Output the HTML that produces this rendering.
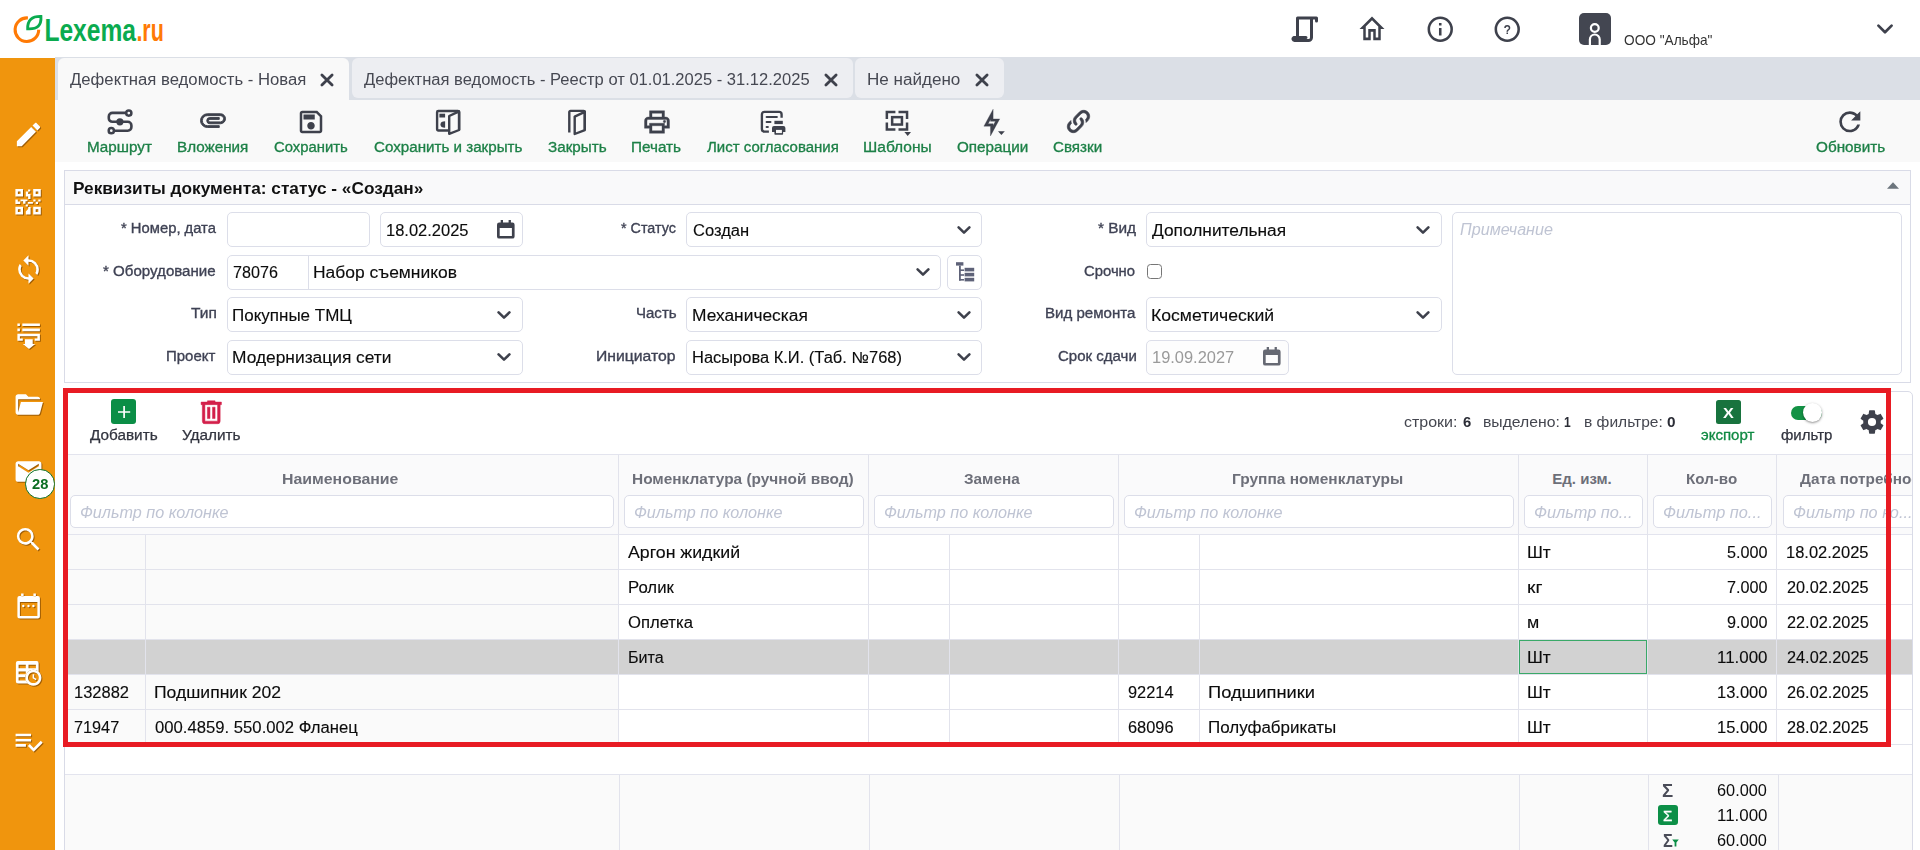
<!DOCTYPE html>
<html lang="ru">
<head>
<meta charset="utf-8">
<title>Дефектная ведомость - Новая</title>
<style>
*{box-sizing:border-box;margin:0;padding:0}
html,body{width:1920px;height:850px;overflow:hidden;background:#fff}
body{font-family:"Liberation Sans",sans-serif;color:#222;position:relative}
.abs{position:absolute}
svg{display:block;overflow:visible}
.t{position:absolute;white-space:nowrap;line-height:1;transform-origin:0 50%}
.inp{position:absolute;border:1px solid #dcdee9;border-radius:5px;background:#fff}
.flt{position:absolute;border:1px solid #dcdee9;border-radius:5px;background:#fff;height:33px;overflow:hidden}
.vl{position:absolute;width:1px;background:#e2e3ec}
.hl{position:absolute;height:1px;background:#e2e3ec}
.sh{filter:drop-shadow(1px 1.5px 0.6px rgba(140,80,0,.55))}
</style>
</head>
<body>
<!-- header -->
<div class="abs" style="left:0;top:0;width:1920px;height:58px;background:#fff">
<svg class="abs" style="left:10px;top:10px" width="160" height="40" viewBox="0 0 160 40">
<path d="M17.9 7.95A11.8 11.8 0 1 0 28.7 19.7" fill="none" stroke="#ff7a05" stroke-width="3.1"/>
<path d="M17.7 18.8C17.4 10 22 6.2 30.9 6.4C31.6 15.4 27.4 19.4 17.7 18.8Z" fill="none" stroke="#0aab4f" stroke-width="2.9" stroke-linejoin="miter"/>
<text x="34.4" y="30.8" font-family="Liberation Sans, sans-serif" font-weight="700" font-size="30.6" fill="#0aab4f" textLength="91.6" lengthAdjust="spacingAndGlyphs">Lexema</text>
<text x="126.4" y="30.8" font-family="Liberation Sans, sans-serif" font-weight="700" font-size="30.6" fill="#ff7a05" textLength="27.4" lengthAdjust="spacingAndGlyphs">.ru</text>
</svg>
<svg class="abs" style="left:1290px;top:14px" width="30" height="30" viewBox="0 0 30 30" fill="none" stroke="#3e414c" stroke-width="3" stroke-linejoin="round" stroke-linecap="round"><path d="M7.5 22V4H26.5V7M21.5 4V23.5A3 3 0 0 1 18.5 26.5H4.5A1.6 1.6 0 0 1 3.6 23.6H16"/></svg>
<svg class="abs" style="left:1357px;top:14px;transform:scaleY(1.12);transform-origin:50% 50%" width="30" height="30" viewBox="0 0 24 24" fill="#3e414c"><path d="M12 5.69L17 10.19V18H15V12H9V18H7V10.19L12 5.69M12 3L2 12H5V20H11V14H13V20H19V12H22"/></svg>
<svg class="abs" style="left:1424.5px;top:14px;" width="30.5" height="30.5" viewBox="0 0 24 24" fill="#3e414c"><path d="M11,9H13V7H11M12,20C7.59,20 4,16.41 4,12C4,7.59 7.59,4 12,4C16.41,4 20,7.59 20,12C20,16.41 16.41,20 12,20M12,2A10,10 0 0,0 2,12A10,10 0 0,0 12,22A10,10 0 0,0 22,12A10,10 0 0,0 12,2M11,17H13V11H11V17Z"/></svg>
<svg class="abs" style="left:1491.7px;top:14px" width="30.5" height="30.5" viewBox="0 0 24 24" fill="#3e414c"><path d="M12,2A10,10 0 0,0 2,12A10,10 0 0,0 12,22A10,10 0 0,0 22,12A10,10 0 0,0 12,2M12,20C7.59,20 4,16.41 4,12C4,7.59 7.59,4 12,4C16.41,4 20,7.59 20,12C20,16.41 16.41,20 12,20Z"/><path transform="translate(12 12.2) scale(.6) translate(-12 -12)" d="M11,18H13V16H11V18M12,6A4,4 0 0,0 8,10H10A2,2 0 0,1 12,8A2,2 0 0,1 14,10C14,12 11,11.75 11,15H13C13,12.75 16,12.5 16,10A4,4 0 0,0 12,6Z"/></svg>
<div class="abs" style="left:1579px;top:13px;width:32px;height:32px;background:#434651;border-radius:5px"></div>
<svg class="abs" style="left:1579px;top:13px" width="32" height="32" viewBox="0 0 32 32" fill="none" stroke="#fff" stroke-width="2.2"><circle cx="15.8" cy="15" r="3.9"/><path d="M10.9 32V26.4A4.9 4.9 0 0 1 20.7 26.4V32"/></svg>
<div class="t" style="left:1624px;top:33px;font-size:14.5px;color:#333;transform:scaleX(0.9424);">ООО "Альфа"</div>
<svg class="abs" style="left:1875px;top:21.2px" width="20" height="16" viewBox="0 0 20 16" fill="none" stroke="#3e414c" stroke-width="2.7" stroke-linecap="round" stroke-linejoin="round"><path d="M3.4 4.6L10 11.2L16.6 4.6"/></svg>
</div>
<!-- sidebar -->
<div class="abs" style="left:0;top:58px;width:55px;height:792px;background:#f0950d"></div>
<svg class="abs" style="left:12.5px;top:118.5px;filter:drop-shadow(1px 1.3px 0.5px rgba(125,70,0,.7))" width="31" height="31" viewBox="0 0 24 24" fill="#fff"><path d="M20.71,7.04C21.1,6.65 21.1,6 20.71,5.63L18.37,3.29C18,2.9 17.35,2.9 16.96,3.29L15.12,5.12L18.87,8.87M3,17.25V21H6.75L17.81,9.93L14.06,6.18L3,17.25Z"/></svg>
<svg class="abs" style="left:12.5px;top:185.5px;filter:drop-shadow(1px 1.3px 0.5px rgba(125,70,0,.7))" width="31" height="31" viewBox="0 0 31 31" fill="#fff"><path fill-rule="evenodd" d="M2.9 3h7.6v7.6h-7.6ZM5.4 5.5v2.6h2.6v-2.6ZM20.7 3h7.6v7.6h-7.6ZM23.2 5.5v2.6h2.6v-2.6ZM2.9 20.8h7.6v7.6h-7.6ZM5.4 23.3v2.6h2.6v-2.6ZM20.7 20.8h7.6v7.6h-7.6ZM23.2 23.3v2.6h2.6v-2.6ZM15.6 3.4h2.2v2.1h-2.2ZM13.3 5.6h2.4v2.4h2.3v5h-2.4v-2.4h-2.3ZM2.9 13.4h2.4v2.2h2.4v2.3h-4.8ZM8 13.4h7v1.9h-2v2.4h-2.4v-2.4h-2.6ZM15.4 16h5v1.8h-5ZM20.8 13.4h2.3v2.2h-2.3ZM23.2 15.7h2.3v2.2h-2.3ZM25.8 13.4h2.3v2.2h-2.3ZM13.2 18.4h2.2v2h-2.2ZM13.3 25.4l2.4-2.4v-2h2.4v7.4h-4.8Z" transform="translate(-.5 0)"/></svg>
<svg class="abs" style="left:12.5px;top:253.5px;filter:drop-shadow(1px 1.3px 0.5px rgba(125,70,0,.7))" width="31" height="31" viewBox="0 0 24 24" fill="#fff"><path d="M12,18A6,6 0 0,1 6,12C6,11 6.25,10.03 6.7,9.2L5.24,7.74C4.46,8.97 4,10.43 4,12A8,8 0 0,0 12,20V23L16,19L12,15M12,4V1L8,5L12,9V6A6,6 0 0,1 18,12C18,13 17.75,13.97 17.3,14.8L18.76,16.26C19.54,15.03 20,13.57 20,12A8,8 0 0,0 12,4Z"/></svg>
<svg class="abs" style="left:12.5px;top:321px;filter:drop-shadow(1px 1.3px 0.5px rgba(125,70,0,.7))" width="31" height="31" viewBox="0 0 31 31" fill="#fff"><path d="M4.4 2.4H6.9V5.1H4.4ZM9.3 2.4H26.9V5.1H9.3ZM4.4 7.6H6.9V10.3H4.4ZM9.3 7.6H26.9V10.3H9.3ZM4.4 12.8H26.9V19.7H21.7V17.5H24.4V15.2H6.9V17.5H9.8V19.7H4.4ZM12 18.2H19.7V23.1H22.2L16 28.1L9.8 23.1H12Z"/></svg>
<svg class="abs" style="left:12.5px;top:388.5px;filter:drop-shadow(1px 1.3px 0.5px rgba(125,70,0,.7))" width="31" height="31" viewBox="0 0 24 24" fill="#fff"><path d="M19,20H4C2.89,20 2,19.1 2,18V6C2,4.89 2.89,4 4,4H10L12,6H19A2,2 0 0,1 21,8H21L4,8V18L6.14,10H23.21L20.93,18.5C20.7,19.37 19.92,20 19,20Z"/></svg>
<svg class="abs" style="left:12.5px;top:455.5px;filter:drop-shadow(1px 1.3px 0.5px rgba(125,70,0,.7))" width="31" height="31" viewBox="0 0 24 24" fill="#fff"><path d="M20,8L12,13L4,8V6L12,11L20,6M20,4H4C2.89,4 2,4.89 2,6V18A2,2 0 0,0 4,20H20A2,2 0 0,0 22,18V6C22,4.89 21.1,4 20,4Z"/></svg>
<svg class="abs" style="left:12.5px;top:523.5px;filter:drop-shadow(1px 1.3px 0.5px rgba(125,70,0,.7))" width="31" height="31" viewBox="0 0 24 24" fill="#fff"><path d="M9.5,3A6.5,6.5 0 0,1 16,9.5C16,11.11 15.41,12.59 14.44,13.73L14.71,14H15.5L20.5,19L19,20.5L14,15.5V14.71L13.73,14.44C12.59,15.41 11.11,16 9.5,16A6.5,6.5 0 0,1 3,9.5A6.5,6.5 0 0,1 9.5,3M9.5,5C7,5 5,7 5,9.5C5,12 7,14 9.5,14C12,14 14,12 14,9.5C14,7 12,5 9.5,5Z"/></svg>
<svg class="abs" style="left:12.5px;top:591px;filter:drop-shadow(1px 1.3px 0.5px rgba(125,70,0,.7))" width="31" height="31" viewBox="0 0 31 31" fill="#fff"><path fill-rule="evenodd" d="M6.4 5.1H24.9A2 2 0 0 1 26.9 7.1V25.6A2 2 0 0 1 24.9 27.6H6.4A2 2 0 0 1 4.4 25.6V7.1A2 2 0 0 1 6.4 5.1ZM6.9 11V24.9H24.4V11ZM8.1 2.4H10.6V5.2H8.1ZM20.4 2.4H22.9V5.2H20.4Z"/><circle cx="10.3" cy="15" r="1.2"/><circle cx="15.5" cy="15" r="1.2"/><circle cx="20.4" cy="15" r="1.2"/></svg>
<svg class="abs" style="left:12.5px;top:658.5px;filter:drop-shadow(1px 1.3px 0.5px rgba(125,70,0,.7))" width="31" height="31" viewBox="0 0 31 31" fill="#fff"><mask id="tcm"><rect width="31" height="31" fill="#fff"/><circle cx="20.4" cy="18.7" r="8" fill="#000"/></mask><path mask="url(#tcm)" fill-rule="evenodd" d="M4.9 2.1H23.6A2 2 0 0 1 25.6 4.1V22.4A2 2 0 0 1 23.6 24.4H4.9A2 2 0 0 1 2.9 22.4V4.1A2 2 0 0 1 4.9 2.1ZM5.6 5.8V9.3H12.8V5.8ZM15.5 5.8V9.3H22.9V5.8ZM5.6 12.5V15.2H12.8V12.5ZM5.6 18.2V21.6H12.8V18.2Z"/><path fill-rule="evenodd" d="M20.4 10.7A8 8 0 1 1 20.39 10.7ZM20.4 13.3A5.4 5.4 0 1 0 20.41 13.3Z"/><path d="M20.4 15.2V18.9L23.2 20.6" fill="none" stroke="#fff" stroke-width="1.6"/></svg>
<svg class="abs" style="left:12.5px;top:726px;filter:drop-shadow(1px 1.3px 0.5px rgba(125,70,0,.7))" width="31" height="31" viewBox="0 0 24 24" fill="#fff"><path d="M14,10H2V12H14V10M14,6H2V8H14V6M2,16H10V14H2V16M21.5,11.5L23,13L16,20L11.5,15.5L13,14L16,17L21.5,11.5Z"/></svg>
<div class="abs" style="left:25px;top:469px;width:29.5px;height:29.5px;background:#fff;border:1.6px solid #0b6e22;border-radius:50%"></div>
<div class="t" style="left:31.6px;top:476px;font-size:15px;color:#0b6e22;font-weight:700;transform:scaleX(0.9791);">28</div>
<!-- tabs -->
<div class="abs" style="left:55px;top:57px;width:1865px;height:43px;background:#dbdfe6"></div>
<div class="abs" style="left:58px;top:58px;width:291.4px;height:42px;background:#f9f9f9;border-radius:6px 6px 0 0"></div>
<div class="abs" style="left:352.3px;top:58px;width:500.6px;height:40.2px;background:#edeef2;border-radius:6px"></div>
<div class="abs" style="left:855px;top:58px;width:148.6px;height:40.2px;background:#edeef2;border-radius:6px"></div>
<div class="t" style="left:70px;top:72px;font-size:16px;color:#464852;transform:scaleX(1.0443);">Дефектная ведомость - Новая</div>
<svg class="abs" style="left:320px;top:72.7px" width="14" height="14" viewBox="0 0 14 14" fill="none" stroke="#3e414c" stroke-width="2.8" stroke-linecap="round"><path d="M1.9 1.9L12.1 12.1M12.1 1.9L1.9 12.1"/></svg>
<div class="t" style="left:364px;top:72px;font-size:16px;color:#464852;transform:scaleX(1.0335);">Дефектная ведомость - Реестр от 01.01.2025 - 31.12.2025</div>
<svg class="abs" style="left:824.4px;top:72.7px" width="14" height="14" viewBox="0 0 14 14" fill="none" stroke="#3e414c" stroke-width="2.8" stroke-linecap="round"><path d="M1.9 1.9L12.1 12.1M12.1 1.9L1.9 12.1"/></svg>
<div class="t" style="left:867.23px;top:72px;font-size:16px;color:#464852;transform:scaleX(1.0665);">Не найдено</div>
<svg class="abs" style="left:974.9px;top:72.7px" width="14" height="14" viewBox="0 0 14 14" fill="none" stroke="#3e414c" stroke-width="2.8" stroke-linecap="round"><path d="M1.9 1.9L12.1 12.1M12.1 1.9L1.9 12.1"/></svg>
<!-- toolbar -->
<div class="abs" style="left:55px;top:100px;width:1865px;height:62px;background:#f9f9f9"></div>
<div class="t" style="left:86.9px;top:141px;font-size:13.8px;color:#1d8047;-webkit-text-stroke:0.3px #1d8047;transform:scaleX(1.1030);">Маршрут</div>
<div class="t" style="left:177.2px;top:141px;font-size:13.8px;color:#1d8047;-webkit-text-stroke:0.3px #1d8047;transform:scaleX(1.1036);">Вложения</div>
<div class="t" style="left:274.2px;top:141px;font-size:13.8px;color:#1d8047;-webkit-text-stroke:0.3px #1d8047;transform:scaleX(1.0765);">Сохранить</div>
<div class="t" style="left:374px;top:141px;font-size:13.8px;color:#1d8047;-webkit-text-stroke:0.3px #1d8047;transform:scaleX(1.0988);">Сохранить и закрыть</div>
<div class="t" style="left:547.8px;top:141px;font-size:13.8px;color:#1d8047;-webkit-text-stroke:0.3px #1d8047;transform:scaleX(1.1029);">Закрыть</div>
<div class="t" style="left:631.39px;top:141px;font-size:13.8px;color:#1d8047;-webkit-text-stroke:0.3px #1d8047;transform:scaleX(1.1066);">Печать</div>
<div class="t" style="left:707px;top:141px;font-size:13.8px;color:#1d8047;-webkit-text-stroke:0.3px #1d8047;transform:scaleX(1.0861);">Лист согласования</div>
<div class="t" style="left:863.27px;top:141px;font-size:13.8px;color:#1d8047;-webkit-text-stroke:0.3px #1d8047;transform:scaleX(1.1269);">Шаблоны</div>
<div class="t" style="left:956.9px;top:141px;font-size:13.8px;color:#1d8047;-webkit-text-stroke:0.3px #1d8047;transform:scaleX(1.1029);">Операции</div>
<div class="t" style="left:1053.3px;top:141px;font-size:13.8px;color:#1d8047;-webkit-text-stroke:0.3px #1d8047;transform:scaleX(1.1007);">Связки</div>
<div class="t" style="left:1816px;top:141px;font-size:13.8px;color:#1d8047;-webkit-text-stroke:0.3px #1d8047;transform:scaleX(1.1079);">Обновить</div>
<svg class="abs" style="left:107px;top:109px" width="26" height="26" viewBox="0 0 26 26" fill="none" stroke="#3e414c" stroke-width="2.6" stroke-linecap="round"><path d="M19 3.9H5.4A3.6 3.6 0 0 0 1.8 7.5V9.2A3.6 3.6 0 0 0 5.4 12.8H20.8A3.6 3.6 0 0 1 24.4 16.4V18.1A3.6 3.6 0 0 1 20.8 21.7H7.2"/><circle cx="21.8" cy="4.1" r="2.6" fill="#f9f9f9" stroke-width="2.5"/><circle cx="4.3" cy="21.7" r="2.6" fill="#f9f9f9" stroke-width="2.5"/><circle cx="12.9" cy="12.8" r="3.6" fill="#3e414c" stroke="none"/></svg>
<svg class="abs" style="left:198px;top:105.4px;stroke:#3e414c;stroke-width:.75px" width="30" height="30" viewBox="0 0 24 24" fill="#3e414c"><path d="M7.5,18A5.5,5.5 0 0,1 2,12.5A5.5,5.5 0 0,1 7.5,7H18A4,4 0 0,1 22,11A4,4 0 0,1 18,15H9.5A2.5,2.5 0 0,1 7,12.5A2.5,2.5 0 0,1 9.5,10H17V11.5H9.5A1,1 0 0,0 8.5,12.5A1,1 0 0,0 9.5,13.5H18A2.5,2.5 0 0,0 20.5,11A2.5,2.5 0 0,0 18,8.5H7.5A4,4 0 0,0 3.5,12.5A4,4 0 0,0 7.5,16.5H17V18H7.5Z"/></svg>
<svg class="abs" style="left:296px;top:107px;" width="30" height="30" viewBox="0 0 24 24" fill="#3e414c"><path d="M17 3H5C3.89 3 3 3.9 3 5V19C3 20.1 3.89 21 5 21H19C20.1 21 21 20.1 21 19V7L17 3M19 19H5V5H16.17L19 7.83V19M12 12C10.34 12 9 13.34 9 15S10.34 18 12 18 15 16.66 15 15 13.66 12 12 12M6 6H15V10H6V6Z"/></svg>
<svg class="abs" style="left:434px;top:108px" width="28" height="28" viewBox="0 0 28 28" fill="none" stroke="#3e414c" stroke-width="2.4" stroke-linejoin="round"><path d="M15.2 22.5H4.3A1.2 1.2 0 0 1 3.1 21.3V4.2A1.2 1.2 0 0 1 4.3 3H23.9A1.2 1.2 0 0 1 25.1 4.2V22"/><path d="M15.2 8L25.1 3.4V22L15.2 25.8Z"/><rect x="5.4" y="5.7" width="5.7" height="3.8" fill="#3e414c" stroke="none"/><path d="M11.1 13.2A4.6 3.3 0 0 0 11.1 19.8Z" fill="#3e414c" stroke="none"/></svg>
<svg class="abs" style="left:565px;top:108px" width="24" height="28" viewBox="0 0 24 28" fill="none" stroke="#3e414c" stroke-width="2.4" stroke-linejoin="round"><path d="M4.3 24.6V4.1A1.2 1.2 0 0 1 5.5 2.9H18.6A1.2 1.2 0 0 1 19.8 4.1V22.1"/><path d="M9.7 8.6L19.8 3.8V22.1L9.7 26Z"/></svg>
<svg class="abs" style="left:642px;top:107px;stroke:#3e414c;stroke-width:.3px" width="30" height="30" viewBox="0 0 24 24" fill="#3e414c"><path d="M19 8C20.66 8 22 9.34 22 11V17H18V21H6V17H2V11C2 9.34 3.34 8 5 8H6V3H18V8H19M8 5V8H16V5H8M16 19V15H8V19H16M18 15H20V11C20 10.45 19.55 10 19 10H5C4.45 10 4 10.45 4 11V15H6V13H18V15M19 11.5C19 12.05 18.55 12.5 18 12.5S17 12.05 17 11.5 17.45 10.5 18 10.5 19 10.95 19 11.5Z"/></svg>
<svg class="abs" style="left:759px;top:109px" width="28" height="27" viewBox="0 0 28 27" fill="#3e414c"><path d="M22.6 8.8V5.4A2.5 2.5 0 0 0 20.1 2.9H5.4A2.5 2.5 0 0 0 2.9 5.4V20.1A2.5 2.5 0 0 0 5.4 22.6H9.9" fill="none" stroke="#3e414c" stroke-width="2.35"/><path d="M7.6 8H17.9M7.6 12.95H11.5M7.6 17.95H8.9" fill="none" stroke="#3e414c" stroke-width="2" stroke-linecap="round"/><rect x="15.4" y="11.8" width="8.4" height="3.3"/><path d="M15 17H24.4A2 2 0 0 1 26.4 19V22.9H13V19A2 2 0 0 1 15 17Z"/><rect x="15.4" y="20.1" width="8.7" height="5.6" rx=".8"/><rect x="17" y="20.9" width="5.9" height="3.2" fill="#f9f9f9"/></svg>
<svg class="abs" style="left:884px;top:109px" width="30" height="28" viewBox="0 0 30 28" fill="none" stroke="#3e414c" stroke-width="2.5"><path d="M2.85 9.9V3H11.4M14.5 3H23.05V9.9M23.05 13.6V20.5H14.5M11.4 20.5H2.85V13.6"/><rect x="8.15" y="8.15" width="9.8" height="7.4"/><path d="M20.4 23.1H27L23.7 27Z" fill="#3e414c" stroke="none"/></svg>
<svg class="abs" style="left:976.3px;top:107.5px" width="31.6" height="29.1" viewBox="0 0 24 24" preserveAspectRatio="none" fill="#3e414c" stroke="#3e414c" stroke-width=".25"><path d="M11 9.47V11H14.76L13 14.53V13H9.24L11 9.47M13 1L6 15H11V23L18 9H13V1Z"/></svg>
<svg class="abs" style="left:998px;top:130.8px" width="8" height="5" viewBox="0 0 8 5"><path d="M0 .2H6.8L3.4 4Z" fill="#3e414c"/></svg>
<svg class="abs" style="left:1063.8px;top:107.3px;stroke:#3e414c;stroke-width:.6px" width="29" height="29" viewBox="0 0 24 24" fill="#3e414c"><path d="M10.59,13.41C11,13.8 11,14.44 10.59,14.83C10.2,15.22 9.56,15.22 9.17,14.83C7.22,12.88 7.22,9.71 9.17,7.76V7.76L12.71,4.22C14.66,2.27 17.83,2.27 19.78,4.22C21.73,6.17 21.73,9.34 19.78,11.29L18.29,12.78C18.3,11.96 18.17,11.14 17.89,10.36L18.36,9.88C19.54,8.71 19.54,6.81 18.36,5.64C17.19,4.46 15.29,4.46 14.12,5.64L10.59,9.17C9.41,10.34 9.41,12.24 10.59,13.41M13.41,9.17C13.8,8.78 14.44,8.78 14.83,9.17C16.78,11.12 16.78,14.29 14.83,16.24V16.24L11.29,19.78C9.34,21.73 6.17,21.73 4.22,19.78C2.27,17.83 2.27,14.66 4.22,12.71L5.71,11.22C5.7,12.04 5.83,12.86 6.11,13.65L5.64,14.12C4.46,15.29 4.46,17.19 5.64,18.36C6.81,19.54 8.71,19.54 9.88,18.36L13.41,14.83C14.59,13.66 14.59,11.76 13.41,10.59C13,10.2 13,9.56 13.41,9.17Z"/></svg>
<svg class="abs" style="left:1833.6px;top:106.4px;" width="31.6" height="31.6" viewBox="0 0 24 24" fill="#3e414c"><path d="M17.65,6.35C16.2,4.9 14.21,4 12,4A8,8 0 0,0 4,12A8,8 0 0,0 12,20C15.73,20 18.84,17.45 19.73,14H17.65C16.83,16.33 14.61,18 12,18A6,6 0 0,1 6,12A6,6 0 0,1 12,6C13.66,6 15.14,6.69 16.22,7.78L13,11H20V4L17.65,6.35Z"/></svg>
<!-- form panel -->
<div class="abs" style="left:64px;top:170px;width:1847px;height:213px;border:1px solid #d9dbe7;background:#fff"></div>
<div class="abs" style="left:65px;top:171px;width:1845px;height:34px;background:#f9f9fa;border-bottom:1px solid #d9dbe7"></div>
<div class="t" style="left:72.96px;top:181px;font-size:16.6px;color:#111;font-weight:700;transform:scaleX(1.0386);">Реквизиты документа: статус - «Создан»</div>
<svg class="abs" style="left:1886.5px;top:182px" width="12" height="7" viewBox="0 0 12 7"><path d="M0 6.8L6 .3L12 6.8Z" fill="#6c757d"/></svg>
<div class="t" style="left:121px;top:222px;font-size:13.8px;color:#3f4254;-webkit-text-stroke:0.32px #3f4254;transform:scaleX(1.0717);">* Номер, дата</div>
<div class="t" style="left:103.3px;top:265px;font-size:13.8px;color:#3f4254;-webkit-text-stroke:0.32px #3f4254;transform:scaleX(1.0932);">* Оборудование</div>
<div class="t" style="left:191px;top:307px;font-size:13.8px;color:#3f4254;-webkit-text-stroke:0.32px #3f4254;transform:scaleX(1.1230);">Тип</div>
<div class="t" style="left:166.21px;top:350px;font-size:13.8px;color:#3f4254;-webkit-text-stroke:0.32px #3f4254;transform:scaleX(1.0858);">Проект</div>
<div class="t" style="left:621px;top:222px;font-size:13.8px;color:#3f4254;-webkit-text-stroke:0.32px #3f4254;transform:scaleX(1.0394);">* Статус</div>
<div class="t" style="left:635.61px;top:307px;font-size:13.8px;color:#3f4254;-webkit-text-stroke:0.32px #3f4254;transform:scaleX(1.0891);">Часть</div>
<div class="t" style="left:596.16px;top:350px;font-size:13.8px;color:#3f4254;-webkit-text-stroke:0.32px #3f4254;transform:scaleX(1.1396);">Инициатор</div>
<div class="t" style="left:1097.7px;top:222px;font-size:13.8px;color:#3f4254;-webkit-text-stroke:0.32px #3f4254;transform:scaleX(1.1140);">* Вид</div>
<div class="t" style="left:1084.3px;top:265px;font-size:13.8px;color:#3f4254;-webkit-text-stroke:0.32px #3f4254;transform:scaleX(1.0750);">Срочно</div>
<div class="t" style="left:1044.91px;top:307px;font-size:13.8px;color:#3f4254;-webkit-text-stroke:0.32px #3f4254;transform:scaleX(1.0928);">Вид ремонта</div>
<div class="t" style="left:1057.7px;top:350px;font-size:13.8px;color:#3f4254;-webkit-text-stroke:0.32px #3f4254;transform:scaleX(1.0881);">Срок сдачи</div>
<div class="inp" style="left:227px;top:212px;width:143px;height:35px;"></div>
<div class="inp" style="left:380px;top:212px;width:143px;height:35px;"></div>
<div class="t" style="left:385.67px;top:223px;font-size:16px;color:#0c0c0c;-webkit-text-stroke:0.12px #0c0c0c;transform:scaleX(1.0306);">18.02.2025</div>
<svg class="abs" style="left:497.3px;top:220.2px" width="17.6" height="18.6" viewBox="0 0 17.6 18.6" fill="#3e414c"><path fill-rule="evenodd" d="M2.2 2.5H15.4A2.2 2.2 0 0 1 17.6 4.7V16.4A2.2 2.2 0 0 1 15.4 18.6H2.2A2.2 2.2 0 0 1 0 16.4V4.7A2.2 2.2 0 0 1 2.2 2.5ZM2.7 7.9V15.9H14.9V7.9ZM3.7 0H6V2.6H3.7ZM11.6 0H13.9V2.6H11.6Z"/></svg>
<div class="inp" style="left:227px;top:255px;width:714px;height:35px;"></div>
<div class="abs" style="left:308px;top:256px;width:1px;height:33px;background:#dcdee9"></div>
<div class="t" style="left:233.3px;top:265px;font-size:16px;color:#0c0c0c;-webkit-text-stroke:0.12px #0c0c0c;transform:scaleX(1.0091);">78076</div>
<div class="t" style="left:313.21px;top:265px;font-size:16px;color:#0c0c0c;-webkit-text-stroke:0.12px #0c0c0c;transform:scaleX(1.0903);">Набор съемников</div>
<svg class="abs" style="left:914.4px;top:266.2px" width="18" height="12" viewBox="0 0 18 12" fill="none" stroke="#3e414c" stroke-width="2.6" stroke-linecap="round" stroke-linejoin="round"><path d="M3.6 3.4L9 8.6L14.4 3.4"/></svg>
<div class="inp" style="left:947px;top:255px;width:35px;height:35px;"></div>
<svg class="abs" style="left:955px;top:261px" width="20" height="22" viewBox="0 0 20 22" fill="#5e6278"><rect x="1" y="1.2" width="7.4" height="3.4"/><rect x="4" y="4.6" width="1.8" height="15"/><rect x="4" y="8.4" width="5" height="1.6"/><rect x="4" y="13.2" width="5" height="1.6"/><rect x="4" y="18" width="5" height="1.6"/><rect x="9.6" y="6.8" width="9.6" height="3.6"/><rect x="9.6" y="11.8" width="9.6" height="3.6"/><rect x="9.6" y="16.8" width="9.6" height="3.6"/></svg>
<div class="inp" style="left:227px;top:297px;width:296px;height:35px;"></div>
<div class="t" style="left:232.24px;top:308px;font-size:16px;color:#0c0c0c;-webkit-text-stroke:0.12px #0c0c0c;transform:scaleX(1.0623);">Покупные ТМЦ</div>
<svg class="abs" style="left:495px;top:308.6px" width="18" height="12" viewBox="0 0 18 12" fill="none" stroke="#3e414c" stroke-width="2.6" stroke-linecap="round" stroke-linejoin="round"><path d="M3.6 3.4L9 8.6L14.4 3.4"/></svg>
<div class="inp" style="left:227px;top:340px;width:296px;height:35px;"></div>
<div class="t" style="left:232.22px;top:350px;font-size:16px;color:#0c0c0c;-webkit-text-stroke:0.12px #0c0c0c;transform:scaleX(1.0848);">Модернизация сети</div>
<svg class="abs" style="left:495px;top:351.4px" width="18" height="12" viewBox="0 0 18 12" fill="none" stroke="#3e414c" stroke-width="2.6" stroke-linecap="round" stroke-linejoin="round"><path d="M3.6 3.4L9 8.6L14.4 3.4"/></svg>
<div class="inp" style="left:686px;top:212px;width:296px;height:35px;"></div>
<div class="t" style="left:692.7px;top:223px;font-size:16px;color:#0c0c0c;-webkit-text-stroke:0.12px #0c0c0c;transform:scaleX(1.0338);">Создан</div>
<svg class="abs" style="left:955px;top:224.1px" width="18" height="12" viewBox="0 0 18 12" fill="none" stroke="#3e414c" stroke-width="2.6" stroke-linecap="round" stroke-linejoin="round"><path d="M3.6 3.4L9 8.6L14.4 3.4"/></svg>
<div class="inp" style="left:686px;top:297px;width:296px;height:35px;"></div>
<div class="t" style="left:691.61px;top:308px;font-size:16px;color:#0c0c0c;-webkit-text-stroke:0.12px #0c0c0c;transform:scaleX(1.0854);">Механическая</div>
<svg class="abs" style="left:955px;top:308.6px" width="18" height="12" viewBox="0 0 18 12" fill="none" stroke="#3e414c" stroke-width="2.6" stroke-linecap="round" stroke-linejoin="round"><path d="M3.6 3.4L9 8.6L14.4 3.4"/></svg>
<div class="inp" style="left:686px;top:340px;width:296px;height:35px;"></div>
<div class="t" style="left:691.67px;top:350px;font-size:16px;color:#0c0c0c;-webkit-text-stroke:0.12px #0c0c0c;transform:scaleX(1.0288);">Насырова К.И. (Таб. №768)</div>
<svg class="abs" style="left:955px;top:351.4px" width="18" height="12" viewBox="0 0 18 12" fill="none" stroke="#3e414c" stroke-width="2.6" stroke-linecap="round" stroke-linejoin="round"><path d="M3.6 3.4L9 8.6L14.4 3.4"/></svg>
<div class="inp" style="left:1146px;top:212px;width:296px;height:35px;"></div>
<div class="t" style="left:1152.3px;top:223px;font-size:16px;color:#0c0c0c;-webkit-text-stroke:0.12px #0c0c0c;transform:scaleX(1.0832);">Дополнительная</div>
<svg class="abs" style="left:1414px;top:224.1px" width="18" height="12" viewBox="0 0 18 12" fill="none" stroke="#3e414c" stroke-width="2.6" stroke-linecap="round" stroke-linejoin="round"><path d="M3.6 3.4L9 8.6L14.4 3.4"/></svg>
<div class="abs" style="left:1147.3px;top:264px;width:14.8px;height:14.8px;border:1.5px solid #767676;border-radius:3.5px;background:#fff"></div>
<div class="inp" style="left:1146px;top:297px;width:296px;height:35px;"></div>
<div class="t" style="left:1151.2px;top:308px;font-size:16px;color:#0c0c0c;-webkit-text-stroke:0.12px #0c0c0c;transform:scaleX(1.0998);">Косметический</div>
<svg class="abs" style="left:1414px;top:308.6px" width="18" height="12" viewBox="0 0 18 12" fill="none" stroke="#3e414c" stroke-width="2.6" stroke-linecap="round" stroke-linejoin="round"><path d="M3.6 3.4L9 8.6L14.4 3.4"/></svg>
<div class="inp" style="left:1146px;top:340px;width:143px;height:35px;background:#fdfdfd"></div>
<div class="t" style="left:1151.67px;top:350px;font-size:16px;color:#9a9a9a;transform:scaleX(1.0268);">19.09.2027</div>
<svg class="abs" style="left:1263.3px;top:347.1px" width="17.6" height="18.6" viewBox="0 0 17.6 18.6" fill="#666973"><path fill-rule="evenodd" d="M2.2 2.5H15.4A2.2 2.2 0 0 1 17.6 4.7V16.4A2.2 2.2 0 0 1 15.4 18.6H2.2A2.2 2.2 0 0 1 0 16.4V4.7A2.2 2.2 0 0 1 2.2 2.5ZM2.7 7.9V15.9H14.9V7.9ZM3.7 0H6V2.6H3.7ZM11.6 0H13.9V2.6H11.6Z"/></svg>
<div class="inp" style="left:1452px;top:212px;width:450px;height:163px"></div>
<div class="t" style="left:1460px;top:222px;font-size:15.6px;color:#bfc4d3;font-style:italic;transform:scaleX(1.0352);">Примечание</div>
<!-- grid panel -->
<div class="abs" style="left:64px;top:391px;width:1849px;height:470px;border:1px solid #d9dbe7;border-radius:5px 5px 0 0;background:#fff"></div>
<div class="abs" style="left:111.4px;top:399.4px;width:25px;height:25px;background:#0b8e46;border-radius:3px"></div>
<svg class="abs" style="left:116px;top:404px" width="16" height="16" viewBox="0 0 16 16" stroke="#fff" stroke-width="1.7"><path d="M2 8H14.2M8.1 1.9V14.1"/></svg>
<div class="t" style="left:89.6px;top:429px;font-size:13.8px;color:#32343f;-webkit-text-stroke:0.25px #32343f;transform:scaleX(1.1088);">Добавить</div>
<svg class="abs" style="left:195.6px;top:396.8px;stroke:#d31f4a;stroke-width:.4px" width="30.5" height="30.5" viewBox="0 0 24 24" fill="#d31f4a"><path d="M9,3V4H4V6H5V19A2,2 0 0,0 7,21H17A2,2 0 0,0 19,19V6H20V4H15V3H9M7,6H17V19H7V6M9,8V17H11V8H9M13,8V17H15V8H13Z"/></svg>
<div class="t" style="left:182.3px;top:429px;font-size:13.8px;color:#32343f;-webkit-text-stroke:0.25px #32343f;transform:scaleX(1.1127);">Удалить</div>
<div class="t" style="left:1404.3px;top:415px;font-size:14.6px;color:#44464f;transform:scaleX(1.0953);">строки:</div>
<div class="t" style="left:1462.6px;top:415px;font-size:14.6px;color:#2b2d36;font-weight:700;transform:scaleX(1.0125);">6</div>
<div class="t" style="left:1482.62px;top:415px;font-size:14.6px;color:#44464f;transform:scaleX(1.0781);">выделено:</div>
<div class="t" style="left:1564.4px;top:415px;font-size:14.6px;color:#2b2d36;font-weight:700;transform:scaleX(0.8250);">1</div>
<div class="t" style="left:1583.93px;top:415px;font-size:14.6px;color:#44464f;transform:scaleX(1.0659);">в фильтре:</div>
<div class="t" style="left:1667.3px;top:415px;font-size:14.6px;color:#2b2d36;font-weight:700;transform:scaleX(1.0500);">0</div>
<div class="abs" style="left:1715.6px;top:399.8px;width:25px;height:24.6px;background:#18733e;border-radius:2.5px"></div>
<div class="t" style="left:1722.6px;top:405px;font-size:15px;color:#fff;font-weight:700;transform:scaleX(1.0800);">X</div>
<div class="t" style="left:1701px;top:428px;font-size:14px;color:#108a43;-webkit-text-stroke:0.3px #108a43;transform:scaleX(1.0742);">экспорт</div>
<div class="abs" style="left:1790.8px;top:405.6px;width:31px;height:14.6px;background:#139245;border-radius:8px"></div>
<div class="abs" style="left:1803.2px;top:403.2px;width:19px;height:19px;background:#fff;border-radius:50%;box-shadow:0 1px 2.5px rgba(0,0,0,.45)"></div>
<div class="t" style="left:1780.7px;top:428px;font-size:14px;color:#32343f;-webkit-text-stroke:0.25px #32343f;transform:scaleX(1.0723);">фильтр</div>
<svg class="abs" style="left:1858px;top:407.5px;" width="28" height="28" viewBox="0 0 24 24" fill="#3e414c"><path d="M12,15.5A3.5,3.5 0 0,1 8.5,12A3.5,3.5 0 0,1 12,8.5A3.5,3.5 0 0,1 15.5,12A3.5,3.5 0 0,1 12,15.5M19.43,12.97C19.47,12.65 19.5,12.33 19.5,12C19.5,11.67 19.47,11.34 19.43,11L21.54,9.37C21.73,9.22 21.78,8.95 21.66,8.73L19.66,5.27C19.54,5.05 19.27,4.96 19.05,5.05L16.56,6.05C16.04,5.66 15.5,5.32 14.87,5.07L14.5,2.42C14.46,2.18 14.25,2 14,2H10C9.75,2 9.54,2.18 9.5,2.42L9.13,5.07C8.5,5.32 7.96,5.66 7.44,6.05L4.95,5.05C4.73,4.96 4.46,5.05 4.34,5.27L2.34,8.73C2.21,8.95 2.27,9.22 2.46,9.37L4.57,11C4.53,11.34 4.5,11.67 4.5,12C4.5,12.33 4.53,12.65 4.57,12.97L2.46,14.63C2.27,14.78 2.21,15.05 2.34,15.27L4.34,18.73C4.46,18.95 4.73,19.03 4.95,18.95L7.44,17.94C7.96,18.34 8.5,18.68 9.13,18.93L9.5,21.58C9.54,21.82 9.75,22 10,22H14C14.25,22 14.46,21.82 14.5,21.58L14.87,18.93C15.5,18.67 16.04,18.34 16.56,17.94L19.05,18.95C19.27,19.03 19.54,18.95 19.66,18.73L21.66,15.27C21.78,15.05 21.73,14.78 21.54,14.63L19.43,12.97Z"/></svg>
<div class="abs" style="left:65px;top:454px;width:1847px;height:81px;background:#fafafb;border-top:1px solid #e3e4ee;border-bottom:1px solid #e3e4ee"></div>
<div class="t" style="left:281.94px;top:471px;font-size:15px;color:#6d6f79;font-weight:700;transform:scaleX(1.0579);">Наименование</div>
<div class="t" style="left:631.67px;top:471px;font-size:15px;color:#6d6f79;font-weight:700;transform:scaleX(1.0273);">Номенклатура (ручной ввод)</div>
<div class="t" style="left:964.3px;top:471px;font-size:15px;color:#6d6f79;font-weight:700;transform:scaleX(1.0210);">Замена</div>
<div class="t" style="left:1231.97px;top:471px;font-size:15px;color:#6d6f79;font-weight:700;transform:scaleX(1.0324);">Группа номенклатуры</div>
<div class="t" style="left:1552.3px;top:471px;font-size:15px;color:#6d6f79;font-weight:700;">Ед. изм.</div>
<div class="t" style="left:1685.69px;top:471px;font-size:15px;color:#6d6f79;font-weight:700;transform:scaleX(1.0103);">Кол-во</div>
<div class="abs" style="left:1778px;top:465px;width:134px;height:30px;overflow:hidden"><div class="t" style="left:22px;top:6px;font-size:15px;color:#6d6f79;font-weight:700;transform:scaleX(1.0229);">Дата потребности</div>
</div>
<div class="flt" style="left:70px;top:495px;width:544px"><div class="t" style="left:8.6px;top:9px;font-size:16px;color:#bfc4d3;font-style:italic;transform:scaleX(1.0110);">Фильтр по колонке</div>
</div>
<div class="flt" style="left:624px;top:495px;width:240px"><div class="t" style="left:8.6px;top:9px;font-size:16px;color:#bfc4d3;font-style:italic;transform:scaleX(1.0110);">Фильтр по колонке</div>
</div>
<div class="flt" style="left:874px;top:495px;width:240px"><div class="t" style="left:8.6px;top:9px;font-size:16px;color:#bfc4d3;font-style:italic;transform:scaleX(1.0110);">Фильтр по колонке</div>
</div>
<div class="flt" style="left:1124px;top:495px;width:390px"><div class="t" style="left:8.6px;top:9px;font-size:16px;color:#bfc4d3;font-style:italic;transform:scaleX(1.0110);">Фильтр по колонке</div>
</div>
<div class="flt" style="left:1524px;top:495px;width:119px"><div class="t" style="left:8.6px;top:9px;font-size:16px;color:#bfc4d3;font-style:italic;transform:scaleX(1.0195);">Фильтр по...</div>
</div>
<div class="flt" style="left:1653px;top:495px;width:119px"><div class="t" style="left:8.6px;top:9px;font-size:16px;color:#bfc4d3;font-style:italic;transform:scaleX(1.0195);">Фильтр по...</div>
</div>
<div class="abs" style="left:1778px;top:490px;width:134px;height:42px;overflow:hidden"><div class="flt" style="left:5px;top:5px;width:166px"><div class="t" style="left:8.6px;top:9px;font-size:16px;color:#bfc4d3;font-style:italic;transform:scaleX(1.0169);">Фильтр по ко...</div>
</div>
</div>
<div class="abs" style="left:65px;top:535px;width:553px;height:210px;background:#fafafa"></div>
<div class="abs" style="left:65px;top:639.5px;width:1847px;height:35px;background:#d2d2d2"></div>
<div class="hl" style="left:65px;top:569px;width:1847px"></div>
<div class="hl" style="left:65px;top:604px;width:1847px"></div>
<div class="hl" style="left:65px;top:639px;width:1847px"></div>
<div class="hl" style="left:65px;top:674px;width:1847px"></div>
<div class="hl" style="left:65px;top:709px;width:1847px"></div>
<div class="hl" style="left:65px;top:744px;width:1847px"></div>
<div class="vl" style="left:618px;top:455px;height:290px"></div>
<div class="vl" style="left:868px;top:455px;height:290px"></div>
<div class="vl" style="left:1118px;top:455px;height:290px"></div>
<div class="vl" style="left:1518px;top:455px;height:290px"></div>
<div class="vl" style="left:1647px;top:455px;height:290px"></div>
<div class="vl" style="left:1776px;top:455px;height:290px"></div>
<div class="vl" style="left:145px;top:535px;height:210px"></div>
<div class="vl" style="left:949px;top:535px;height:210px"></div>
<div class="vl" style="left:1199px;top:535px;height:210px"></div>
<div class="abs" style="left:1519px;top:640px;width:128px;height:34px;border:1px solid #3aa968"></div>
<div class="t" style="left:628.3px;top:545px;font-size:16px;color:#0c0c0c;-webkit-text-stroke:0.12px #0c0c0c;transform:scaleX(1.1084);">Аргон жидкий</div>
<div class="t" style="left:628.15px;top:580px;font-size:16px;color:#0c0c0c;-webkit-text-stroke:0.12px #0c0c0c;transform:scaleX(1.0459);">Ролик</div>
<div class="t" style="left:628.3px;top:615px;font-size:16px;color:#0c0c0c;-webkit-text-stroke:0.12px #0c0c0c;transform:scaleX(1.0401);">Оплетка</div>
<div class="t" style="left:628.19px;top:650px;font-size:16px;color:#0c0c0c;-webkit-text-stroke:0.12px #0c0c0c;transform:scaleX(1.0062);">Бита</div>
<div class="t" style="left:73.57px;top:685px;font-size:16px;color:#0c0c0c;-webkit-text-stroke:0.12px #0c0c0c;transform:scaleX(1.0306);">132882</div>
<div class="t" style="left:153.9px;top:685px;font-size:16px;color:#0c0c0c;-webkit-text-stroke:0.12px #0c0c0c;transform:scaleX(1.0972);">Подшипник 202</div>
<div class="t" style="left:74px;top:720px;font-size:16px;color:#0c0c0c;-webkit-text-stroke:0.12px #0c0c0c;transform:scaleX(1.0158);">71947</div>
<div class="t" style="left:155px;top:720px;font-size:16px;color:#0c0c0c;-webkit-text-stroke:0.12px #0c0c0c;transform:scaleX(1.0421);">000.4859. 550.002 Фланец</div>
<div class="t" style="left:1128.3px;top:685px;font-size:16px;color:#0c0c0c;-webkit-text-stroke:0.12px #0c0c0c;transform:scaleX(1.0248);">92214</div>
<div class="t" style="left:1208.16px;top:685px;font-size:16px;color:#0c0c0c;-webkit-text-stroke:0.12px #0c0c0c;transform:scaleX(1.1431);">Подшипники</div>
<div class="t" style="left:1128.3px;top:720px;font-size:16px;color:#0c0c0c;-webkit-text-stroke:0.12px #0c0c0c;transform:scaleX(1.0248);">68096</div>
<div class="t" style="left:1208.24px;top:720px;font-size:16px;color:#0c0c0c;-webkit-text-stroke:0.12px #0c0c0c;transform:scaleX(1.0603);">Полуфабрикаты</div>
<div class="t" style="left:1527.22px;top:545px;font-size:16px;color:#0c0c0c;-webkit-text-stroke:0.12px #0c0c0c;transform:scaleX(1.0801);">Шт</div>
<div class="t" style="left:1726.7px;top:545px;font-size:16px;color:#0c0c0c;-webkit-text-stroke:0.12px #0c0c0c;transform:scaleX(1.0114);">5.000</div>
<div class="t" style="left:1785.67px;top:545px;font-size:16px;color:#0c0c0c;-webkit-text-stroke:0.12px #0c0c0c;transform:scaleX(1.0306);">18.02.2025</div>
<div class="t" style="left:1527.1px;top:580px;font-size:16px;color:#0c0c0c;-webkit-text-stroke:0.12px #0c0c0c;transform:scaleX(1.2000);">кг</div>
<div class="t" style="left:1726.7px;top:580px;font-size:16px;color:#0c0c0c;-webkit-text-stroke:0.12px #0c0c0c;transform:scaleX(1.0114);">7.000</div>
<div class="t" style="left:1786.7px;top:580px;font-size:16px;color:#0c0c0c;-webkit-text-stroke:0.12px #0c0c0c;transform:scaleX(1.0177);">20.02.2025</div>
<div class="t" style="left:1527.19px;top:615px;font-size:16px;color:#0c0c0c;-webkit-text-stroke:0.12px #0c0c0c;transform:scaleX(1.1111);">м</div>
<div class="t" style="left:1726.7px;top:615px;font-size:16px;color:#0c0c0c;-webkit-text-stroke:0.12px #0c0c0c;transform:scaleX(1.0114);">9.000</div>
<div class="t" style="left:1786.7px;top:615px;font-size:16px;color:#0c0c0c;-webkit-text-stroke:0.12px #0c0c0c;transform:scaleX(1.0177);">22.02.2025</div>
<div class="t" style="left:1527.22px;top:650px;font-size:16px;color:#0c0c0c;-webkit-text-stroke:0.12px #0c0c0c;transform:scaleX(1.0801);">Шт</div>
<div class="t" style="left:1716.74px;top:650px;font-size:16px;color:#0c0c0c;-webkit-text-stroke:0.12px #0c0c0c;transform:scaleX(1.0565);">11.000</div>
<div class="t" style="left:1786.7px;top:650px;font-size:16px;color:#0c0c0c;-webkit-text-stroke:0.12px #0c0c0c;transform:scaleX(1.0177);">24.02.2025</div>
<div class="t" style="left:1527.22px;top:685px;font-size:16px;color:#0c0c0c;-webkit-text-stroke:0.12px #0c0c0c;transform:scaleX(1.0801);">Шт</div>
<div class="t" style="left:1716.77px;top:685px;font-size:16px;color:#0c0c0c;-webkit-text-stroke:0.12px #0c0c0c;transform:scaleX(1.0304);">13.000</div>
<div class="t" style="left:1786.7px;top:685px;font-size:16px;color:#0c0c0c;-webkit-text-stroke:0.12px #0c0c0c;transform:scaleX(1.0177);">26.02.2025</div>
<div class="t" style="left:1527.22px;top:720px;font-size:16px;color:#0c0c0c;-webkit-text-stroke:0.12px #0c0c0c;transform:scaleX(1.0801);">Шт</div>
<div class="t" style="left:1716.77px;top:720px;font-size:16px;color:#0c0c0c;-webkit-text-stroke:0.12px #0c0c0c;transform:scaleX(1.0304);">15.000</div>
<div class="t" style="left:1786.7px;top:720px;font-size:16px;color:#0c0c0c;-webkit-text-stroke:0.12px #0c0c0c;transform:scaleX(1.0177);">28.02.2025</div>
<div class="abs" style="left:65px;top:774px;width:1847px;height:76px;background:#fafafa;border-top:1px solid #e3e4ee"></div>
<div class="vl" style="left:619px;top:775px;height:75px"></div>
<div class="vl" style="left:869px;top:775px;height:75px"></div>
<div class="vl" style="left:1119px;top:775px;height:75px"></div>
<div class="vl" style="left:1519px;top:775px;height:75px"></div>
<div class="vl" style="left:1648px;top:775px;height:75px"></div>
<div class="vl" style="left:1778px;top:775px;height:75px"></div>
<div class="t" style="left:1661.9px;top:783px;font-size:17.5px;color:#4a4c58;font-weight:700;transform:scaleX(1.0600);">Σ</div>
<div class="t" style="left:1717.3px;top:783px;font-size:16px;color:#0c0c0c;transform:scaleX(1.0196);">60.000</div>
<div class="abs" style="left:1658px;top:805px;width:20px;height:20px;background:#0c8f47;border-radius:3px"></div>
<div class="t" style="left:1663px;top:809px;font-size:14.5px;color:#fff;-webkit-text-stroke:0.3px #fff;transform:scaleX(1.0444);">Σ</div>
<div class="t" style="left:1716.74px;top:808px;font-size:16px;color:#0c0c0c;transform:scaleX(1.0565);">11.000</div>
<div class="t" style="left:1662.6px;top:833px;font-size:17.5px;color:#4a4c58;font-weight:700;transform:scaleX(0.9300);">Σ</div>
<svg class="abs" style="left:1671.8px;top:839.4px" width="7" height="8" viewBox="0 0 7 8"><path d="M.2 .4H6.8L4.4 3.4V7.6H2.6V3.4Z" fill="#0c8f47"/></svg>
<div class="t" style="left:1717.3px;top:833px;font-size:16px;color:#0c0c0c;transform:scaleX(1.0196);">60.000</div>
<div class="abs" style="left:63px;top:388px;width:1828px;height:359px;border:5px solid #e81b23"></div>
</body>
</html>
